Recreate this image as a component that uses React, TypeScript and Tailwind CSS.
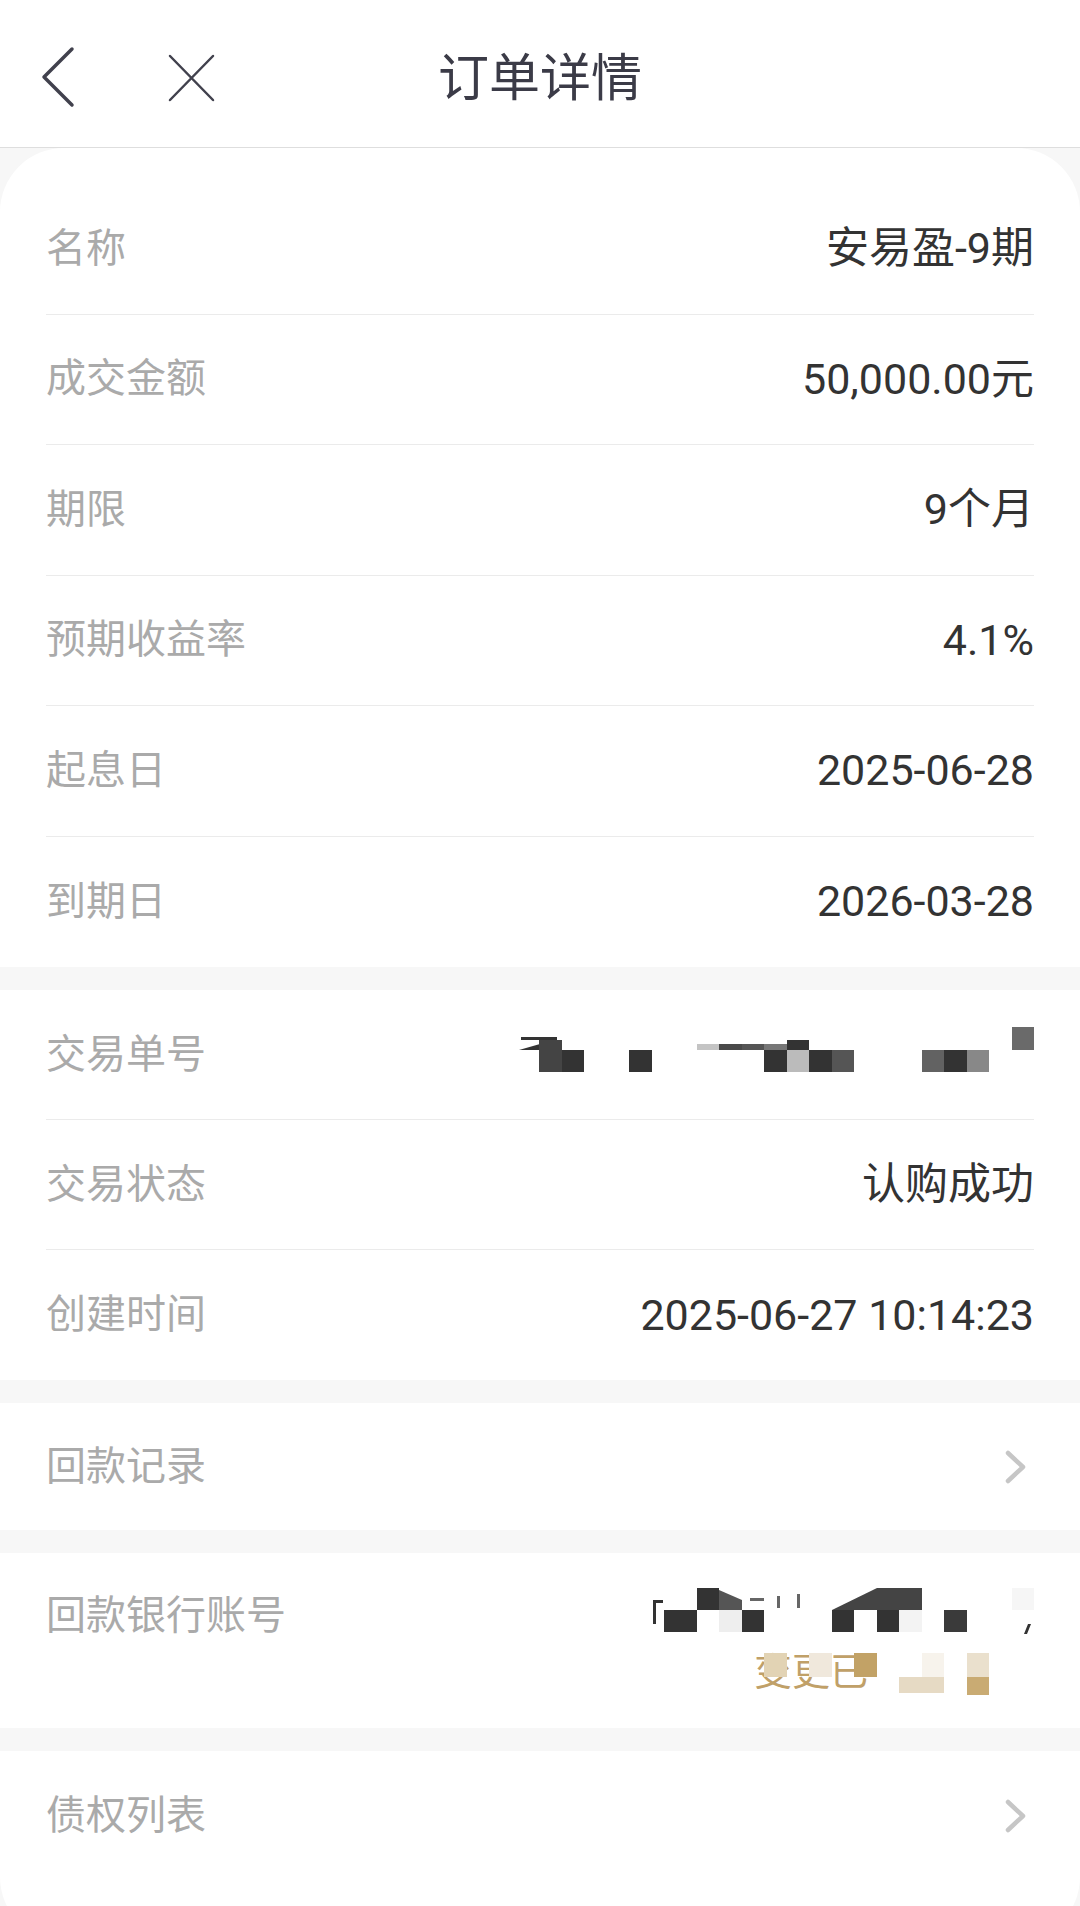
import type { ReactNode } from "react";

const info1 = [
  { label: "名称", value: "安易盈-9期" },
  { label: "成交金额", value: "50,000.00元" },
  { label: "期限", value: "9个月" },
  { label: "预期收益率", value: "4.1%" },
  { label: "起息日", value: "2025-06-28" },
  { label: "到期日", value: "2026-03-28" },
];

function Gap() {
  return <div className="h-[23px] bg-[#f7f7f7]" />;
}

function Row({
  label,
  children,
  last,
  h = "h-[130px]",
}: {
  label: string;
  children?: ReactNode;
  last?: boolean;
  h?: string;
}) {
  return (
    <div
      className={[
        "mx-[46px] flex items-center justify-between",
        h,
        last ? "" : "border-b border-[#ebebeb]",
      ].join(" ")}
    >
      <span className="text-[40px] text-[#aaaaaa]">{label}</span>
      {children}
    </div>
  );
}

function Chevron() {
  return (
    <svg width="30" height="40" viewBox="0 0 30 40" fill="none">
      <polyline
        points="4,6 19,20 4,34"
        stroke="#c6c6c6"
        strokeWidth="4.5"
        strokeLinecap="round"
        strokeLinejoin="round"
      />
    </svg>
  );
}

// redacted order number (mosaic)
function OrderMosaic() {
  const cells: [number, number, number, number, string][] = [
    [25, 13, 23, 32, "#444"],
    [48, 23, 22, 22, "#333"],
    [115, 23, 23, 22, "#333"],
    [183, 17, 22, 6, "#c4c4c4"],
    [205, 17, 23, 6, "#4a4a4a"],
    [228, 17, 22, 6, "#555"],
    [250, 17, 23, 6, "#777"],
    [273, 13, 22, 10, "#333"],
    [250, 23, 23, 22, "#333"],
    [273, 23, 22, 22, "#bbb"],
    [295, 23, 23, 22, "#333"],
    [318, 23, 22, 22, "#555"],
    [408, 23, 22, 22, "#626262"],
    [430, 23, 23, 22, "#333"],
    [453, 23, 22, 22, "#888"],
    [498, 0, 22, 23, "#6a6a6a"],
  ];
  return (
    <svg width="520" height="56" viewBox="0 0 520 56">
      <rect x="7" y="10" width="36" height="3" fill="#333" />
      <polygon points="5,23 40,13 25,23" fill="#333" />
      {cells.map(([x, y, w, hh, c], i) => (
        <rect key={i} x={x} y={y} width={w} height={hh} fill={c} />
      ))}
    </svg>
  );
}

function BankMosaic() {
  const cells: [number, number, number, number, string][] = [
    [45, 0, 22, 22, "#333"],
    [360, 0, 22, 22, "#f6f6f6"],
    [12, 22, 33, 22, "#333"],
    [67, 22, 23, 22, "#eeeeee"],
    [90, 22, 22, 22, "#333"],
    [180, 22, 22, 22, "#333"],
    [225, 22, 22, 22, "#333"],
    [247, 22, 23, 22, "#f3f3f3"],
    [292, 22, 23, 22, "#3a3a3a"],
  ];
  return (
    <svg width="382" height="56" viewBox="0 0 382 56">
      <rect x="1" y="12" width="3" height="24" fill="#333" />
      <rect x="1" y="12" width="10" height="3" fill="#333" />
      <polygon points="67,2 90,12 90,22 67,22" fill="#555" />
      <polygon points="180,22 225,0 270,0 270,22" fill="#444" />
      <rect x="98" y="10" width="14" height="3" fill="#666" />
      <rect x="125" y="8" width="3" height="12" fill="#666" />
      <rect x="145" y="6" width="3" height="14" fill="#666" />
      <polygon points="372,46 376,36 379,36 375,46" fill="#333" />
      {cells.map(([x, y, w, hh, c], i) => (
        <rect key={i} x={x} y={y} width={w} height={hh} fill={c} />
      ))}
    </svg>
  );
}

function GoldMosaic() {
  const cells: [number, number, number, number, string][] = [
    [112, 9, 23, 24, "#e2d3b4"],
    [157, 9, 23, 24, "#f0e8dc"],
    [202, 9, 23, 24, "#c2a266"],
    [270, 9, 22, 24, "#f7f3ec"],
    [315, 9, 22, 24, "#eae0cd"],
    [225, 33, 67, 16, "#ffffff"],
    [247, 33, 45, 16, "#e6dac4"],
    [315, 33, 22, 18, "#c9ab73"],
  ];
  return (
    <svg
      className="absolute inset-0"
      width="382"
      height="56"
      viewBox="0 0 382 56"
    >
      {cells.map(([x, y, w, hh, c], i) => (
        <rect key={i} x={x} y={y} width={w} height={hh} fill={c} />
      ))}
    </svg>
  );
}

export default function App() {
  return (
    <div className="h-[1906px] overflow-hidden bg-[#f7f7f7] font-[family-name:Roboto,'Noto_Sans_CJK_SC',sans-serif] text-[43px] leading-none text-[#333]">
      {/* header */}
      <header className="grid h-[148px] grid-cols-[1fr_auto_1fr] items-center border-b border-[#dedede] bg-white">
        <div className="flex items-center">
          <svg className="ml-[38px]" width="40" height="70" viewBox="0 0 40 70" fill="none">
            <polyline
              points="34,10 6,38 34,66"
              stroke="#41414d"
              strokeWidth="3.5"
              strokeLinecap="round"
              strokeLinejoin="round"
            />
          </svg>
          <svg className="ml-[82px]" width="64" height="70" viewBox="0 0 64 70" fill="none">
            <path d="M10 17 L53 61 M53 17 L10 61" stroke="#41414d" strokeWidth="2.5" strokeLinecap="round" />
          </svg>
        </div>
        <h1 className="pt-[10px] text-[51px] font-normal text-[#3b3b47]">订单详情</h1>
        <div />
      </header>

      {/* card */}
      <main className="rounded-[64px] bg-white pb-[60px]">
        <section className="pt-[36px]">
          {info1.map((it, i) => (
            <Row key={it.label} label={it.label} h="h-[130.5px]" last={i === info1.length - 1}>
              <span>{it.value}</span>
            </Row>
          ))}
        </section>
        <Gap />
        <section>
          <Row label="交易单号">
            <OrderMosaic />
          </Row>
          <Row label="交易状态">
            <span>认购成功</span>
          </Row>
          <Row label="创建时间" last>
            <span>2025-06-27 10:14:23</span>
          </Row>
        </section>
        <Gap />
        <section>
          <Row label="回款记录" last h="h-[127px]">
            <Chevron />
          </Row>
        </section>
        <Gap />
        <section className="mx-[46px] flex h-[175px] items-start justify-between pt-[35px]">
          <span className="text-[40px] leading-[56px] text-[#aaaaaa]">回款银行账号</span>
          <div className="flex flex-col">
            <BankMosaic />
            <div className="relative h-[56px] w-[382px]">
              <span className="block pl-[102px] text-[38px] leading-[56px] text-[#c0a068]">变更已</span>
              <GoldMosaic />
            </div>
          </div>
        </section>
        <Gap />
        <section>
          <Row label="债权列表" last>
            <Chevron />
          </Row>
        </section>
      </main>
    </div>
  );
}
